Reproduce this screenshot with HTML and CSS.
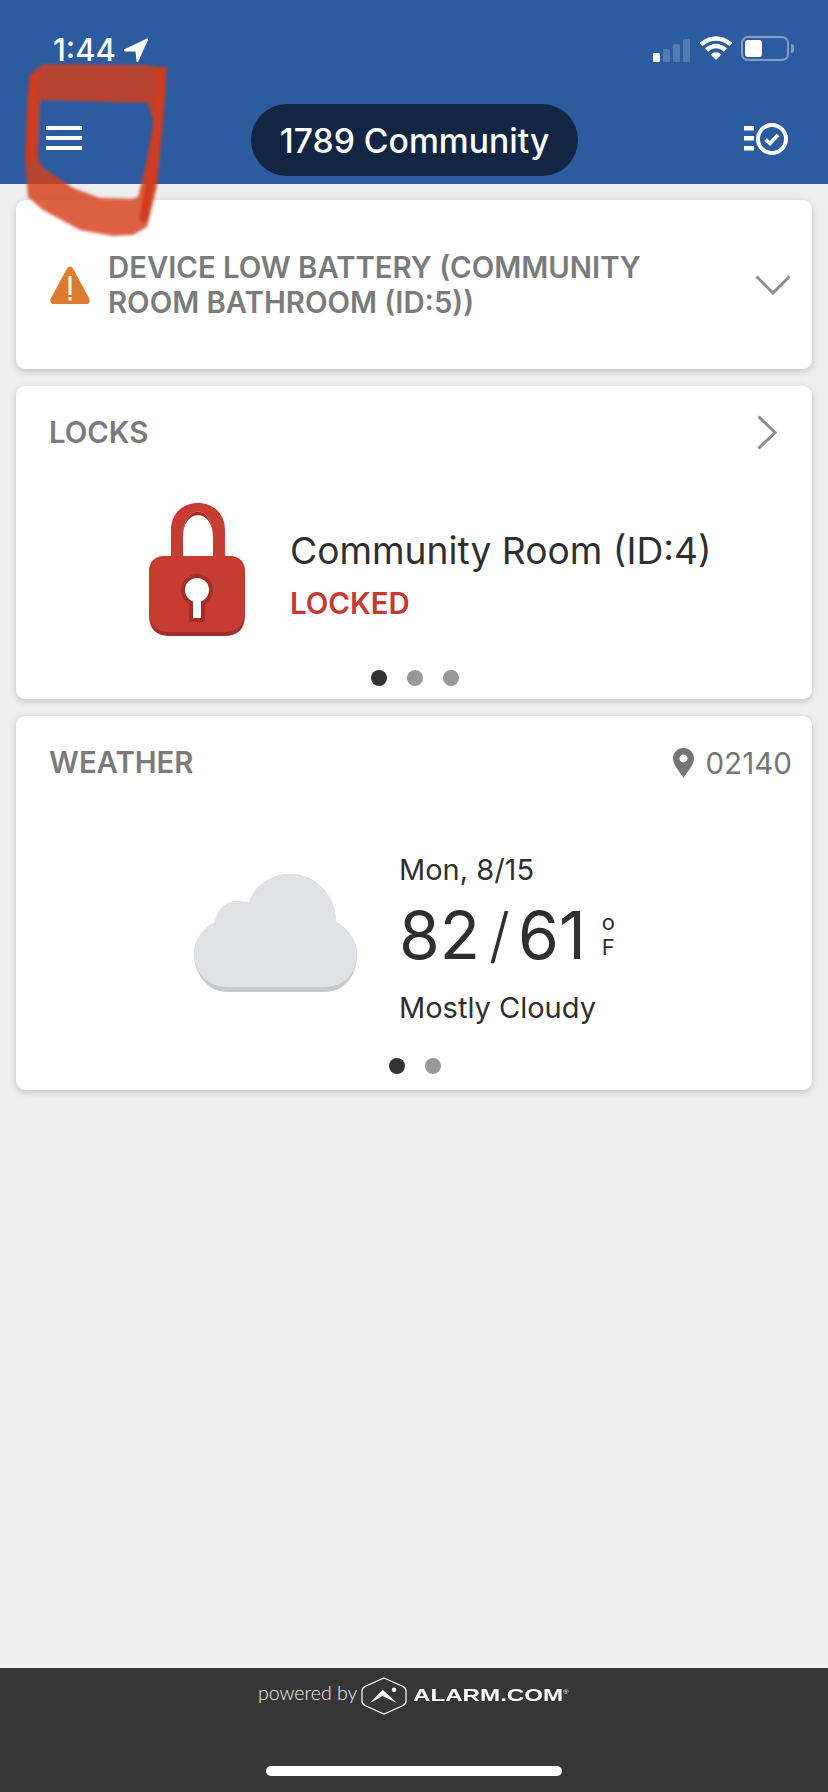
FILE: index.html
```html
<!DOCTYPE html>
<html lang="en">
<head>
<meta charset="utf-8">
<title>1789 Community</title>
<link rel="stylesheet" href="styles.css">
</head>
<body>
<div class="app">
  <header class="top">
    <div class="status">
      <div class="clock"><span>1:44</span>
        <svg class="loc" width="24" height="24" viewBox="0 0 24 24"><path d="M0 11.500L23 0.500Q24.500 0 24 2L14 24Q12.500 25 12.500 22.500L11.500 13.500L1 13.500Q-1.500 12.500 0 11.500Z" fill="#fff"/></svg>
      </div>
      <div class="sys">
        <svg class="signal" width="37" height="23" viewBox="0 0 37 23">
          <rect class="on" x="0" y="14" width="7" height="9" rx="1.500"/>
          <rect class="off" x="10" y="10" width="7" height="13" rx="1.500"/>
          <rect class="off" x="20" y="5" width="7" height="18" rx="1.500"/>
          <rect class="off" x="30" y="0" width="7" height="23" rx="1.500"/>
        </svg>
        <svg class="wifi" width="32" height="24" viewBox="0 0 32 24">
          <path d="M1 8.500Q16 -3.500 31 8.500" />
          <path d="M6.500 14Q16 6 25.500 14" />
          <path class="dot" d="M10.500 18.500Q16 14 21.500 18.500L16 24Z" />
        </svg>
        <div class="battery"><div class="charge"></div></div>
        <div class="nub"></div>
      </div>
    </div>
    <nav class="nav">
      <div class="burger"><i></i><i></i><i></i></div>
      <div class="pill">1789 Community</div>
      <svg class="tasks" width="46" height="34" viewBox="0 0 46 34">
        <rect x="0" y="4" width="10" height="4.500" fill="#fff"/>
        <rect x="0" y="14" width="10" height="4.500" fill="#fff"/>
        <rect x="0" y="24" width="10" height="4.500" fill="#fff"/>
        <circle cx="28" cy="17" r="14" fill="none" stroke="#fff" stroke-width="4"/>
        <path d="M21.500 17.500L26 21.500L34 13" fill="none" stroke="#fff" stroke-width="3.600"/>
      </svg>
    </nav>
  </header>

  <main class="main">
    <section class="card alert">
      <svg class="warn" width="40" height="38" viewBox="0 0 40 38">
        <path d="M17 2.500Q20 -1.500 23 2.500L39.500 33Q40.500 38 36 38L4 38Q-0.500 38 0.500 33Z" fill="#de7b2f"/>
        <rect x="18.500" y="10" width="3" height="19" fill="#fff"/>
        <rect x="18.500" y="31" width="3" height="3.500" fill="#fff"/>
      </svg>
      <div class="alert-text">DEVICE LOW BATTERY (COMMUNITY ROOM BATHROOM (ID:5))</div>
      <svg class="chev-down" width="36" height="20" viewBox="0 0 36 20"><path d="M1.500 1.500L18 18L34.500 1.500" fill="none" stroke="#8e8e8e" stroke-width="3"/></svg>
    </section>

    <section class="card locks">
      <div class="card-head">
        <h2 class="card-title">LOCKS</h2>
        <svg class="chev-right" width="20" height="35" viewBox="0 0 20 35"><path d="M1.500 1.500L18 17.500L1.500 33.500" fill="none" stroke="#8e8e8e" stroke-width="3"/></svg>
      </div>
      <div class="lock-row">
        <svg class="padlock" width="96" height="133" viewBox="0 0 96 133">
          <path d="M22 60V27C22 -9 76 -9 76 27V60H64V34C64 0 34 0 34 34V60Z" fill="#c73c31"/>
          <path d="M34 34C34 0 64 0 64 34C64 5 34 5 34 34Z" fill="#a32e27"/>
          <path d="M0 70Q0 53 17 53H79Q96 53 96 70V112Q96 133 75 133H21Q0 133 0 112Z" fill="#a32e27"/>
          <path d="M0 70Q0 53 17 53H79Q96 53 96 70V108Q96 129 75 129H21Q0 129 0 108Z" fill="#c73c31"/>
          <circle cx="48" cy="87" r="16" fill="#a32e27"/>
          <rect x="40" y="90" width="16" height="29" fill="#a32e27"/>
          <circle cx="48" cy="87" r="12" fill="#fff"/>
          <rect x="44" y="90" width="8" height="25" fill="#fff"/>
        </svg>
        <div class="lock-info">
          <div class="lock-name">Community Room (ID:4)</div>
          <div class="lock-state">LOCKED</div>
        </div>
      </div>
      <div class="dots"><i class="active"></i><i></i><i></i></div>
    </section>

    <section class="card weather">
      <div class="card-head">
        <h2 class="card-title">WEATHER</h2>
        <div class="zip">
          <svg class="pin" width="21" height="30" viewBox="0 0 21 30"><path fill-rule="evenodd" d="M10.500 0C16.500 0 21 4.500 21 10.500C21 17 14 24 10.500 30C7 24 0 17 0 10.500C0 4.500 4.500 0 10.500 0ZM10.500 6.500A4 4 0 1 0 10.501 6.500Z" fill="#757575"/></svg>
          <span>02140</span>
        </div>
      </div>
      <div class="forecast">
        <svg class="cloud" width="163" height="118" viewBox="0 0 163 118">
          <path d="M33 118C14 118 0 100 0 80C0 67 8 55 21 48C23 36 32 27 44 27C48 27 52 28 55 29C60 12 76 0 97 0C122 0 142 22 142 48C155 55 163 67 163 81C163 102 150 118 131 118Z" fill="#c9cacf"/>
          <path d="M33 113C14 113 0 98 0 80C0 67 8 55 21 48C23 36 32 27 44 27C48 27 52 28 55 29C60 12 76 0 97 0C122 0 142 22 142 48C155 55 163 67 163 81C163 98 150 113 131 113Z" fill="#e1e2e6"/>
        </svg>
        <div class="fc-info">
          <div class="fc-date">Mon, 8/15</div>
          <div class="fc-temp">
            <span>82</span><span class="slash">/</span><span>61</span>
            <span class="unit"><span>o</span><span>F</span></span>
          </div>
          <div class="fc-cond">Mostly Cloudy</div>
        </div>
      </div>
      <div class="dots"><i class="active"></i><i></i></div>
    </section>
  </main>

  <footer class="foot">
    <div class="powered">
      <span class="by">powered by</span>
      <svg class="adc" width="46" height="38" viewBox="0 0 46 38">
        <path d="M23 1L42 9.500Q45 11 45 14V24Q45 27 42 28.500L23 37L4 28.500Q1 27 1 24V14Q1 11 4 9.500Z" fill="none" stroke="#fff" stroke-width="1.200"/>
        <path d="M9 26L21.700 12.700L36 26L21.700 19Z" fill="#fff"/>
        <circle cx="33" cy="12.700" r="2.300" fill="#fff"/>
      </svg>
      <span class="brand">ALARM.COM<sup class="reg">®</sup></span>
    </div>
    <div class="home"></div>
  </footer>

  <svg class="scribble" width="150" height="190" viewBox="0 0 150 190">
    <defs><filter id="soft" x="-10%" y="-10%" width="120%" height="120%"><feGaussianBlur stdDeviation="1.600"/></filter></defs>
    <g filter="url(#soft)">
      <path class="ink" fill-rule="evenodd" d="M19 1L123 2L143 5L141 37L133 124L123 164L109 172L89 173L56 167L19 147L4 134L1 97L4 30L11 7ZM18 37L16 40L14 94L18 104L49 125L76 135L108 136L114 134L121 104L130 60L124 40Z"/>
      <path class="stroke-r" d="M136 8L135 50L127 115L120 155"/>
      <path class="stroke-l" d="M10 14L8 40L6 95"/>
    </g>
  </svg>
</div>
</body>
</html>
```
FILE: styles.css
```css
* { box-sizing: border-box; }
html, body { margin: 0; padding: 0; }
body { font-family: Inter, "Liberation Sans", sans-serif; background: #efefef; }

.app {
  position: relative;
  width: 828px;
  height: 1792px;
  display: flex;
  flex-direction: column;
  overflow: hidden;
}

/* Header */
.top { height: 184px; background: #2c5ba0; color: #fff; flex: none; }
.status {
  height: 104px;
  padding: 35px 34px 0 53px;
  display: flex;
  justify-content: space-between;
  align-items: flex-start;
}
.clock {
  display: flex;
  align-items: center;
  gap: 8px;
  font-size: 31px;
  font-weight: 500;
  line-height: 30px;
}
.sys { display: flex; align-items: center; height: 28px; margin-top: -1px; }
.signal { margin: 4px 0 0 1px; }
.signal .on { fill: #fff; }
.signal .off { fill: #fff; opacity: 0.2; }
.wifi { margin-left: 10px; }
.wifi path { fill: none; stroke: #fff; stroke-width: 4.500px; }
.wifi .dot { fill: #fff; stroke: none; }
.battery {
  margin-left: 9px;
  width: 48px;
  height: 25px;
  border: 2px solid rgba(255, 255, 255, 0.4);
  border-radius: 7px;
  padding: 2px;
}
.charge { width: 17px; height: 17px; background: #fff; border-radius: 3px; }
.nub {
  margin-left: 2px;
  width: 3px;
  height: 9px;
  background: rgba(255, 255, 255, 0.4);
  border-radius: 0 3px 3px 0;
}

.nav {
  height: 72px;
  padding: 0 38px 0 46px;
  display: flex;
  align-items: center;
  justify-content: space-between;
}
.burger { width: 36px; height: 24px; display: flex; flex-direction: column; justify-content: space-between; margin-top: -4px; }
.burger i { display: block; height: 4px; background: #fff; }
.pill {
  margin-left: 3px;
  height: 72px;
  width: 327px;
  border-radius: 36px;
  background: #122543;
  display: flex;
  align-items: center;
  justify-content: center;
  font-size: 33.700px;
  font-weight: 500;
}
.tasks { margin-top: -3px; }

/* Main */
.main {
  flex: 1;
  padding: 16px 16px 0;
  display: flex;
  flex-direction: column;
  gap: 17px;
}
.card {
  background: #fff;
  border-radius: 9px;
  box-shadow: 0 2px 7px rgba(0, 0, 0, 0.2);
}
.alert {
  height: 169px;
  padding: 0 21px 0 34px;
  display: flex;
  align-items: center;
}
.warn { flex: none; margin-top: 1px; }
.alert-text {
  flex: 1;
  margin-left: 18px;
  padding-right: 70px;
  font-size: 29.300px;
  font-weight: 600;
  line-height: 35px;
  color: #7b7b7b;
}
.chev-down { flex: none; margin-top: 1px; }

.card-head {
  height: 93px;
  padding: 0 20px 0 33px;
  display: flex;
  align-items: center;
  justify-content: space-between;
}
.card-title {
  margin: 0;
  font-size: 29.300px;
  font-weight: 600;
  color: #7b7b7b;
}
.chev-right { margin-right: 15px; }

.locks { height: 313px; display: flex; flex-direction: column; }
.lock-row { display: flex; padding: 24px 0 0 133px; gap: 45px; }
.padlock { flex: none; }
.lock-info { padding-top: 25px; }
.lock-name { font-size: 37.200px; line-height: 46px; color: #2f2f2f; }
.lock-state { margin-top: 12px; font-size: 29.400px; line-height: 36px; font-weight: 600; color: #c83a31; }

.dots { display: flex; justify-content: center; gap: 20px; padding-left: 2px; }
.dots i { width: 16px; height: 16px; border-radius: 50%; background: #989898; }
.dots .active { background: #333; }
.locks .dots { margin-top: 34px; }

.weather { height: 374px; }
.zip { display: flex; align-items: center; gap: 11px; font-size: 29.600px; color: #757575; }
.forecast { display: flex; padding: 41px 0 0 178px; gap: 42px; }
.cloud { flex: none; margin-top: 24px; }
.fc-date, .fc-cond { font-size: 29px; line-height: 40px; color: #2f2f2f; }
.fc-temp {
  display: flex;
  align-items: center;
  height: 78px;
  margin-top: 6px;
  font-size: 66px;
  color: #2f2f2f;
  line-height: 78px;
}
.slash { font-size: 60px; font-weight: 300; margin: 0 8px 0 9px; }
.unit {
  display: flex;
  flex-direction: column;
  align-items: center;
  margin-left: 16px;
  font-size: 22px;
  line-height: 25px;
}
.fc-cond { margin-top: 14px; }
.weather .dots { margin-top: 30px; }

/* Footer */
.foot {
  flex: none;
  height: 124px;
  background: #363636;
  display: flex;
  flex-direction: column;
  align-items: center;
  padding-top: 9px;
}
.powered { display: flex; align-items: center; height: 38px; width: 312px; color: #fff; }
.by { font-family: Lato, sans-serif; font-size: 19.500px; font-weight: 300; line-height: 32px; margin-bottom: 6px; color: #eee; white-space: nowrap; width: 103px; }
.adc { flex: none; }
.brand {
  margin-left: 6px;
  font-family: "Liberation Sans", sans-serif;
  font-weight: 700;
  font-size: 17px;
  white-space: nowrap;
  display: inline-block;
  transform: scaleX(1.42);
  transform-origin: left center;
}
.reg { font-size: 5px; font-weight: 400; vertical-align: 7px; line-height: 0; }
.home { margin-top: 51px; width: 296px; height: 10px; border-radius: 5px; background: #fff; }

/* Hand-drawn annotation over the header */
.scribble { position: absolute; left: 24px; top: 63px; }
.ink { fill: #d63e1c; opacity: 0.82; }
.stroke-r, .stroke-l { fill: none; stroke: #cf3b1e; stroke-linecap: round; stroke-linejoin: round; }
.stroke-r { stroke-width: 9px; }
.stroke-l { stroke-width: 9px; }
```
